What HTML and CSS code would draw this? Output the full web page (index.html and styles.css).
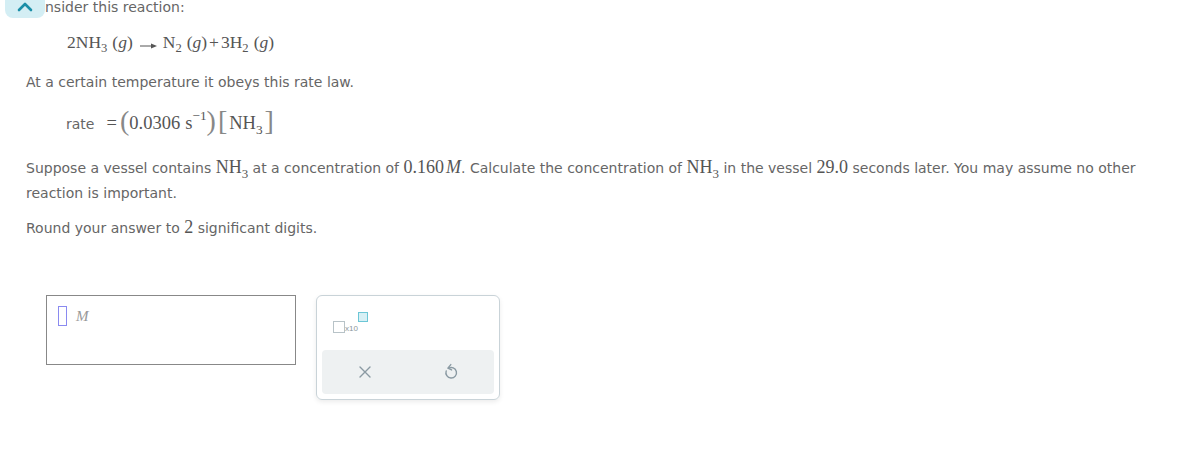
FILE: index.html
```html
<!DOCTYPE html>
<html>
<head>
<meta charset="utf-8">
<link rel="stylesheet" href="styles.css">
</head>
<body>
<div class="page">
  <div class="top-line">
    <div class="collapse-tab">
      <svg width="16" height="10" viewBox="0 0 16 10"><path d="M2 8 L8 2 L14 8" fill="none" stroke="#1b8fa8" stroke-width="2.6" stroke-linecap="round" stroke-linejoin="round"/></svg>
    </div>
    <span class="cut-text">nsider this reaction:</span>
  </div>

  <div class="eq eq-reaction">
    <span>2NH<sub>3</sub></span><span class="paren">(<i>g</i>)</span>
    <span class="arrow"><svg width="20" height="8" viewBox="0 0 20 8"><path d="M1 4 H15" stroke="#555" stroke-width="1"/><path d="M12 1.5 L18 4 L12 6.5 Z" fill="#555"/></svg></span>
    <span>N<sub>2</sub></span><span class="paren">(<i>g</i>)</span><span class="op">+</span><span>3H<sub>2</sub></span><span class="paren">(<i>g</i>)</span>
  </div>

  <p class="text p-temp">At a certain temperature it obeys this rate law.</p>

  <div class="rate-line">
    <span class="rate-word">rate</span>
    <span class="eq rate-eq"><span class="eqs">=</span><span class="big">(</span>0.0306<span class="thin"></span>s<sup>&minus;1</sup><span class="big">)</span><span class="big br">[</span>NH<sub>3</sub><span class="big br">]</span></span>
  </div>

  <p class="text p-main">Suppose a vessel contains <span class="m">NH<sub>3</sub></span> at a concentration of <span class="m">0.160<i class="mi">M</i></span>. Calculate the concentration of <span class="m">NH<sub>3</sub></span> in the vessel <span class="m">29.0</span> seconds later. You may assume no other reaction is important.</p>

  <p class="text p-round">Round your answer to <span class="m">2</span> significant digits.</p>

  <div class="answer-row">
    <div class="answer-box">
      <span class="cursor-box"></span><span class="unit">M</span>
    </div>
    <div class="keypad">
      <div class="keypad-top">
        <span class="sci">
          <span class="sci-base"></span><span class="sci-x">x10</span><span class="sci-exp"></span>
        </span>
      </div>
      <div class="keypad-bar">
        <svg class="kicon" width="14" height="14" viewBox="0 0 14 14"><path d="M2 2 L12 12 M12 2 L2 12" stroke="#8a9aa3" stroke-width="1.4" stroke-linecap="round"/></svg>
        <svg class="kicon" width="16" height="18" viewBox="0 0 16 18"><path d="M5.5 5.2 A5.3 5.3 0 1 1 3.2 8" fill="none" stroke="#8a9aa3" stroke-width="1.4" stroke-linecap="round"/><path d="M7.8 1.6 L4.9 5.1 L8.6 6.9" fill="none" stroke="#8a9aa3" stroke-width="1.4" stroke-linecap="round" stroke-linejoin="round"/></svg>
      </div>
    </div>
  </div>
</div>
</body>
</html>
```

FILE: styles.css
```css
html, body {
  margin: 0;
  padding: 0;
  background: #fff;
}
body {
  font-family: "DejaVu Sans", Verdana, sans-serif;
  color: #555;
  width: 1179px;
  height: 462px;
  overflow: hidden;
}
.page {
  padding-left: 26px;
}
.top-line {
  display: flex;
  align-items: flex-start;
  height: 18px;
  margin-left: -21px;
}
.collapse-tab {
  width: 40px;
  height: 18px;
  background: #d4eef4;
  border-radius: 0 0 8px 8px;
  display: flex;
  align-items: center;
  justify-content: center;
  padding-bottom: 4px;
  box-sizing: border-box;
}
.cut-text {
  font-size: 14px;
  line-height: 14px;
  color: #666;
}
.eq {
  font-family: "Liberation Serif", "Times New Roman", serif;
  color: #555;
}
.eq-reaction {
  font-size: 17.5px;
  margin-left: 41px;
  margin-top: 14px;
  display: flex;
  align-items: baseline;
  height: 24px;
}
.eq sub, .m sub {
  font-size: 0.72em;
  vertical-align: -0.35em;
  line-height: 0;
}
.eq sup {
  font-size: 0.72em;
  vertical-align: 0.7em;
  line-height: 0;
}
.paren {
  margin-left: 5px;
}
.arrow {
  margin: 0 4px 0 6px;
  display: inline-flex;
  align-self: center;
  padding-top: 3px;
}
.op {
  margin: 0 2px;
}
.text {
  margin: 0;
  font-size: 14px;
  line-height: 25px;
  color: #666;
}
.p-temp {
  margin-top: 14px;
}
.rate-line {
  margin-left: 40px;
  margin-top: 13px;
  height: 30px;
  line-height: 30px;
  white-space: nowrap;
}
.rate-word {
  font-size: 14px;
  color: #666;
}
.rate-eq {
  font-size: 18.5px;
}
.eqs {
  margin: 0 3px 0 7px;
}
.thin {
  display: inline-block;
  width: 5px;
}
.big {
  font-size: 28px;
  line-height: 0;
  display: inline-block;
  vertical-align: -1px;
  color: #888;
}
.br {
  margin: 0 2px;
}
.p-main {
  margin-top: 17px;
  width: 1130px;
}
.m {
  font-family: "Liberation Serif", "Times New Roman", serif;
  font-size: 18px;
  color: #555;
}
.mi {
  margin-left: 2px;
}
.p-round {
  margin-top: 9px;
}
.answer-row {
  display: flex;
  align-items: flex-start;
  gap: 20px;
  margin-top: 54px;
  margin-left: 20px;
}
.answer-box {
  border: 1px solid #888;
  display: flex;
  align-items: flex-start;
  padding: 10px 0 0 11px;
  box-sizing: content-box;
  width: 237px;
  height: 58px;
}
.cursor-box {
  width: 7px;
  height: 18px;
  border: 1px solid #8a8af0;
}
.unit {
  font-family: "Liberation Serif", "Times New Roman", serif;
  font-style: italic;
  font-size: 15px;
  color: #999;
  margin-left: 9px;
  margin-top: 2px;
}
.keypad {
  border: 1px solid #c9d3d8;
  border-radius: 6px;
  box-shadow: 0 2px 5px rgba(0,0,0,0.08);
  padding: 5px;
  box-sizing: border-box;
  display: flex;
  flex-direction: column;
  width: 184px;
  height: 105px;
}
.keypad-top {
  height: 49px;
  display: flex;
  align-items: flex-start;
  padding: 11px 0 0 11px;
  box-sizing: border-box;
}
.sci {
  display: flex;
  align-items: flex-end;
  height: 21px;
}
.sci-base {
  width: 10px;
  height: 10px;
  border: 1.5px solid #b8c3c8;
}
.sci-x {
  font-family: "Liberation Sans", Arial, sans-serif;
  font-size: 8px;
  color: #8c979c;
  line-height: 9px;
}
.sci-exp {
  width: 8px;
  height: 8px;
  border: 1.5px solid #6cc6d6;
  background: #d7f0f5;
  align-self: flex-start;
  margin-left: 0px;
}
.keypad-bar {
  flex: 1;
  background: #eef1f2;
  border-radius: 4px;
  display: flex;
  align-items: center;
  justify-content: center;
  gap: 71px;
}
.kicon {
  display: block;
}
```
